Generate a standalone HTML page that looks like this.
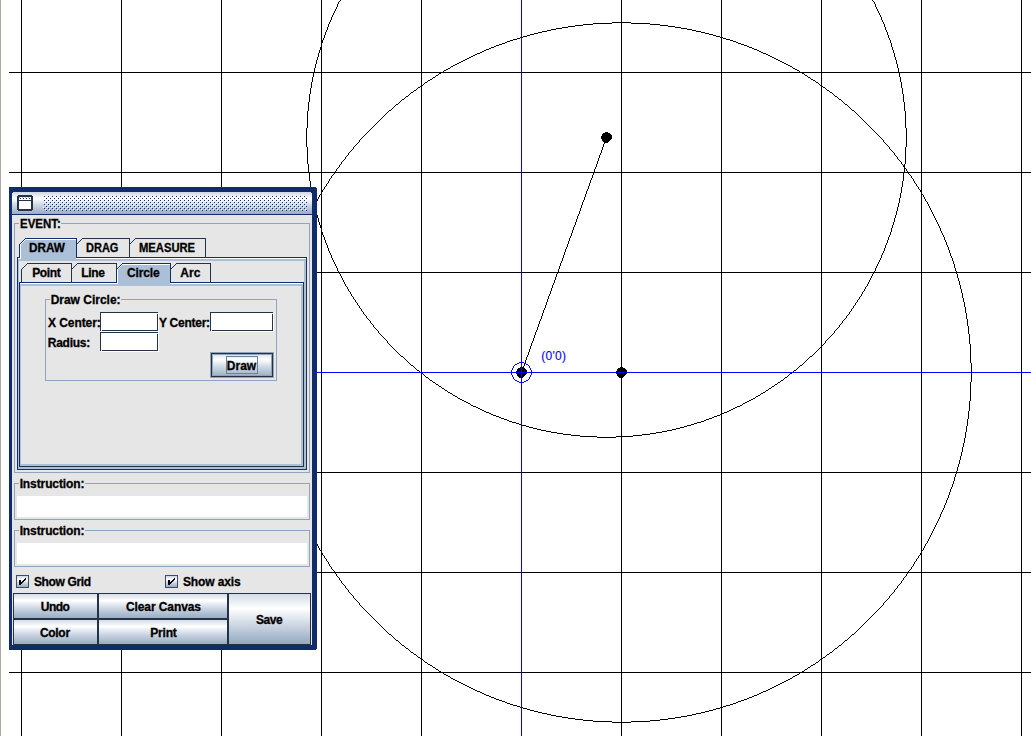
<!DOCTYPE html>
<html lang="en"><head><meta charset="utf-8"><title>Geometry Canvas</title>
<style>
html,body{margin:0;padding:0;background:#fff;}
body{width:1031px;height:736px;position:relative;overflow:hidden;font:bold 12px/14px "Liberation Sans",Arial,sans-serif;color:#000;}
div,span,svg{position:absolute;display:block;}
svg{left:0;top:0;}
.fr{background:#112c6b;}
.ct{background:#e6e6e6;}
.t{white-space:nowrap;height:14px;transform-origin:0 0;-webkit-text-stroke:0.3px #000;}
.lb{white-space:nowrap;font-weight:normal;color:#0000ff;height:14px;letter-spacing:0.3px;-webkit-text-stroke:0.1px #0000ff;}
</style></head>
<body>
<svg class="cv" width="1031" height="736" viewBox="0 0 1031 736" shape-rendering="crispEdges"><rect x="0" y="0" width="1" height="736" fill="#aca8a2"/><path d="M21 0h1v736h-1zM121 0h1v736h-1zM221 0h1v736h-1zM321 0h1v736h-1zM421 0h1v736h-1zM521 0h1v736h-1zM621 0h1v736h-1zM721 0h1v736h-1zM821 0h1v736h-1zM921 0h1v736h-1zM1021 0h1v736h-1zM9 72h1022v1h-1022zM9 172h1022v1h-1022zM9 272h1022v1h-1022zM9 372h1022v1h-1022zM9 472h1022v1h-1022zM9 572h1022v1h-1022zM9 672h1022v1h-1022z" fill="#000"/><path d="M340 0h1v1h-1zM872 0h1v1h-1zM339 1h1v1h-1zM873 1h1v1h-1zM338 2h1v2h-1zM874 2h1v2h-1zM337 4h1v3h-1zM875 4h1v3h-1zM336 7h1v2h-1zM876 7h1v2h-1zM335 9h1v2h-1zM877 9h1v2h-1zM334 11h1v2h-1zM878 11h1v2h-1zM333 13h1v2h-1zM879 13h1v2h-1zM332 15h1v2h-1zM880 15h1v2h-1zM331 17h1v3h-1zM881 17h1v3h-1zM330 20h1v2h-1zM882 20h1v2h-1zM329 22h1v2h-1zM612 22h19v1h-19zM883 22h1v2h-1zM593 23h19v1h-19zM631 23h19v1h-19zM328 24h1v3h-1zM583 24h10v1h-10zM650 24h10v1h-10zM884 24h1v3h-1zM575 25h8v1h-8zM660 25h8v1h-8zM568 26h7v1h-7zM668 26h7v1h-7zM327 27h1v3h-1zM562 27h6v1h-6zM675 27h6v1h-6zM885 27h1v3h-1zM556 28h6v1h-6zM681 28h6v1h-6zM551 29h5v1h-5zM687 29h5v1h-5zM326 30h1v2h-1zM547 30h4v1h-4zM692 30h4v1h-4zM886 30h1v2h-1zM542 31h5v1h-5zM696 31h5v1h-5zM325 32h1v3h-1zM538 32h4v1h-4zM701 32h4v1h-4zM887 32h1v3h-1zM534 33h4v1h-4zM705 33h4v1h-4zM530 34h4v1h-4zM709 34h4v1h-4zM324 35h1v3h-1zM527 35h3v1h-3zM713 35h3v1h-3zM888 35h1v3h-1zM523 36h4v1h-4zM716 36h4v1h-4zM520 37h3v1h-3zM720 37h3v1h-3zM323 38h1v2h-1zM517 38h3v1h-3zM723 38h3v1h-3zM889 38h1v2h-1zM513 39h4v1h-4zM726 39h4v1h-4zM322 40h1v3h-1zM510 40h3v1h-3zM730 40h3v1h-3zM890 40h1v3h-1zM507 41h3v1h-3zM733 41h3v1h-3zM505 42h2v1h-2zM736 42h2v1h-2zM321 43h1v4h-1zM502 43h3v1h-3zM738 43h3v1h-3zM891 43h1v4h-1zM499 44h3v1h-3zM741 44h3v1h-3zM496 45h3v1h-3zM744 45h3v1h-3zM494 46h2v1h-2zM747 46h2v1h-2zM320 47h1v3h-1zM491 47h3v1h-3zM749 47h3v1h-3zM892 47h1v3h-1zM489 48h2v1h-2zM752 48h2v1h-2zM486 49h3v1h-3zM754 49h3v1h-3zM319 50h1v3h-1zM484 50h2v1h-2zM757 50h2v1h-2zM893 50h1v3h-1zM482 51h2v1h-2zM759 51h2v1h-2zM480 52h2v1h-2zM761 52h2v1h-2zM318 53h1v4h-1zM477 53h3v1h-3zM763 53h3v1h-3zM894 53h1v4h-1zM475 54h2v1h-2zM766 54h2v1h-2zM473 55h2v1h-2zM768 55h2v1h-2zM471 56h2v1h-2zM770 56h2v1h-2zM317 57h1v3h-1zM469 57h2v1h-2zM772 57h2v1h-2zM895 57h1v3h-1zM467 58h2v1h-2zM774 58h2v1h-2zM465 59h2v1h-2zM776 59h2v1h-2zM316 60h1v4h-1zM463 60h2v1h-2zM778 60h2v1h-2zM896 60h1v4h-1zM461 61h2v1h-2zM780 61h2v1h-2zM459 62h2v1h-2zM782 62h2v1h-2zM457 63h2v1h-2zM784 63h2v1h-2zM315 64h1v4h-1zM455 64h2v1h-2zM786 64h2v1h-2zM897 64h1v4h-1zM453 65h2v1h-2zM788 65h2v1h-2zM451 66h2v1h-2zM790 66h2v1h-2zM450 67h1v1h-1zM792 67h1v1h-1zM314 68h1v4h-1zM448 68h2v1h-2zM793 68h2v1h-2zM898 68h1v4h-1zM446 69h2v1h-2zM795 69h2v1h-2zM444 70h2v1h-2zM797 70h2v1h-2zM443 71h1v1h-1zM799 71h1v1h-1zM313 72h1v5h-1zM441 72h2v1h-2zM800 72h2v1h-2zM899 72h1v5h-1zM439 73h2v1h-2zM802 73h2v1h-2zM438 74h1v1h-1zM804 74h1v1h-1zM436 75h2v1h-2zM805 75h2v1h-2zM435 76h1v1h-1zM807 76h1v1h-1zM312 77h1v5h-1zM433 77h2v1h-2zM808 77h2v1h-2zM900 77h1v5h-1zM432 78h1v1h-1zM810 78h1v1h-1zM430 79h2v1h-2zM811 79h2v1h-2zM428 80h2v1h-2zM813 80h2v1h-2zM427 81h1v1h-1zM815 81h1v1h-1zM311 82h1v6h-1zM425 82h2v1h-2zM816 82h2v1h-2zM901 82h1v6h-1zM424 83h1v1h-1zM818 83h1v1h-1zM423 84h1v1h-1zM819 84h1v1h-1zM421 85h2v1h-2zM820 85h2v1h-2zM420 86h1v1h-1zM822 86h1v1h-1zM418 87h2v1h-2zM823 87h2v1h-2zM310 88h1v6h-1zM417 88h1v1h-1zM825 88h1v1h-1zM902 88h1v6h-1zM416 89h1v1h-1zM826 89h1v1h-1zM414 90h2v1h-2zM827 90h2v1h-2zM413 91h1v1h-1zM829 91h1v1h-1zM411 92h2v1h-2zM830 92h2v1h-2zM410 93h1v1h-1zM832 93h1v1h-1zM309 94h1v8h-1zM409 94h1v1h-1zM833 94h1v1h-1zM903 94h1v8h-1zM408 95h1v1h-1zM834 95h1v1h-1zM406 96h2v1h-2zM835 96h2v1h-2zM405 97h1v1h-1zM837 97h1v1h-1zM404 98h1v1h-1zM838 98h1v1h-1zM402 99h2v1h-2zM839 99h2v1h-2zM401 100h1v1h-1zM841 100h1v1h-1zM400 101h1v1h-1zM842 101h1v1h-1zM308 102h1v9h-1zM399 102h1v1h-1zM843 102h1v1h-1zM904 102h1v9h-1zM398 103h1v1h-1zM844 103h1v1h-1zM396 104h2v1h-2zM845 104h2v1h-2zM395 105h1v1h-1zM847 105h1v1h-1zM394 106h1v1h-1zM848 106h1v1h-1zM393 107h1v1h-1zM849 107h1v1h-1zM392 108h1v1h-1zM850 108h1v1h-1zM391 109h1v1h-1zM851 109h1v1h-1zM389 110h2v1h-2zM852 110h2v1h-2zM307 111h1v17h-1zM388 111h1v1h-1zM854 111h1v1h-1zM905 111h1v17h-1zM387 112h1v1h-1zM855 112h1v1h-1zM386 113h1v1h-1zM856 113h1v1h-1zM385 114h1v1h-1zM857 114h1v1h-1zM384 115h1v1h-1zM858 115h1v1h-1zM383 116h1v1h-1zM859 116h1v1h-1zM382 117h1v1h-1zM860 117h1v1h-1zM381 118h1v1h-1zM861 118h1v1h-1zM380 119h1v1h-1zM862 119h1v1h-1zM379 120h1v1h-1zM863 120h1v1h-1zM378 121h1v1h-1zM864 121h1v1h-1zM377 122h1v1h-1zM865 122h1v1h-1zM376 123h1v1h-1zM866 123h1v1h-1zM375 124h1v1h-1zM867 124h1v1h-1zM374 125h1v1h-1zM868 125h1v1h-1zM373 126h1v1h-1zM869 126h1v1h-1zM372 127h1v1h-1zM870 127h1v1h-1zM306 128h1v19h-1zM371 128h1v1h-1zM871 128h1v1h-1zM906 128h1v19h-1zM370 129h1v1h-1zM872 129h1v1h-1zM369 130h1v1h-1zM873 130h1v1h-1zM368 131h1v1h-1zM874 131h1v1h-1zM367 132h1v1h-1zM875 132h1v1h-1zM366 133h1v1h-1zM876 133h1v1h-1zM365 134h1v1h-1zM877 134h1v1h-1zM364 135h1v1h-1zM878 135h1v1h-1zM363 136h1v1h-1zM879 136h1v1h-1zM362 137h1v1h-1zM606 137h1v2h-1zM880 137h1v1h-1zM361 138h1v1h-1zM881 138h1v1h-1zM360 139h1v1h-1zM605 139h1v3h-1zM882 139h1v1h-1zM359 140h1v2h-1zM883 140h1v2h-1zM358 142h1v1h-1zM604 142h1v2h-1zM884 142h1v1h-1zM357 143h1v1h-1zM885 143h1v1h-1zM356 144h1v1h-1zM603 144h1v3h-1zM886 144h1v1h-1zM355 145h1v1h-1zM887 145h1v1h-1zM354 146h1v1h-1zM888 146h1v1h-1zM307 147h1v17h-1zM353 147h1v2h-1zM602 147h1v3h-1zM889 147h1v2h-1zM905 147h1v17h-1zM352 149h1v1h-1zM890 149h1v1h-1zM351 150h1v1h-1zM601 150h1v3h-1zM891 150h1v1h-1zM350 151h1v1h-1zM892 151h1v1h-1zM349 152h1v1h-1zM893 152h1v1h-1zM348 153h1v2h-1zM600 153h1v2h-1zM894 153h1v2h-1zM347 155h1v1h-1zM599 155h1v3h-1zM895 155h1v1h-1zM346 156h1v1h-1zM896 156h1v1h-1zM345 157h1v2h-1zM897 157h1v2h-1zM598 158h1v3h-1zM344 159h1v1h-1zM898 159h1v1h-1zM343 160h1v1h-1zM899 160h1v1h-1zM342 161h1v1h-1zM597 161h1v3h-1zM900 161h1v1h-1zM341 162h1v2h-1zM901 162h1v2h-1zM308 164h1v9h-1zM340 164h1v1h-1zM596 164h1v3h-1zM902 164h1v1h-1zM904 164h1v1h-1zM339 165h1v2h-1zM903 165h2v2h-2zM338 167h1v1h-1zM595 167h1v2h-1zM904 167h1v1h-1zM337 168h1v1h-1zM904 168h2v1h-2zM336 169h1v2h-1zM594 169h1v3h-1zM904 169h1v4h-1zM906 169h1v2h-1zM335 171h1v1h-1zM907 171h1v1h-1zM334 172h1v2h-1zM593 172h1v3h-1zM908 172h1v2h-1zM309 173h1v8h-1zM903 173h1v8h-1zM333 174h1v1h-1zM909 174h1v1h-1zM332 175h1v1h-1zM592 175h1v3h-1zM910 175h1v1h-1zM331 176h1v2h-1zM911 176h1v2h-1zM330 178h1v1h-1zM591 178h1v2h-1zM912 178h1v1h-1zM329 179h1v2h-1zM913 179h1v2h-1zM590 180h1v3h-1zM310 181h1v6h-1zM328 181h1v2h-1zM902 181h1v6h-1zM914 181h1v2h-1zM327 183h1v1h-1zM589 183h1v3h-1zM915 183h1v1h-1zM326 184h1v2h-1zM916 184h1v2h-1zM325 186h1v1h-1zM588 186h1v3h-1zM917 186h1v1h-1zM311 187h1v6h-1zM324 187h1v2h-1zM901 187h1v6h-1zM918 187h1v2h-1zM323 189h1v1h-1zM587 189h1v2h-1zM919 189h1v1h-1zM322 190h1v2h-1zM920 190h1v2h-1zM586 191h1v3h-1zM321 192h1v2h-1zM921 192h1v2h-1zM312 193h1v5h-1zM900 193h1v5h-1zM320 194h1v1h-1zM585 194h1v3h-1zM922 194h1v1h-1zM319 195h1v2h-1zM923 195h1v2h-1zM318 197h1v2h-1zM584 197h1v3h-1zM924 197h1v2h-1zM313 198h1v5h-1zM899 198h1v5h-1zM317 199h1v2h-1zM925 199h1v2h-1zM583 200h1v2h-1zM316 201h1v1h-1zM926 201h1v1h-1zM315 202h1v1h-1zM582 202h1v3h-1zM927 202h1v2h-1zM314 203h2v1h-2zM898 203h1v4h-1zM314 204h1v2h-1zM928 204h1v2h-1zM581 205h1v3h-1zM313 206h2v1h-2zM929 206h1v2h-1zM313 207h1v1h-1zM315 207h1v4h-1zM897 207h1v4h-1zM312 208h1v2h-1zM580 208h1v3h-1zM930 208h1v2h-1zM311 210h1v2h-1zM931 210h1v2h-1zM316 211h1v4h-1zM579 211h1v3h-1zM896 211h1v4h-1zM310 212h1v2h-1zM932 212h1v2h-1zM309 214h1v2h-1zM578 214h1v2h-1zM933 214h1v2h-1zM317 215h1v3h-1zM895 215h1v3h-1zM308 216h1v2h-1zM577 216h1v3h-1zM934 216h1v2h-1zM307 218h1v2h-1zM318 218h1v4h-1zM894 218h1v4h-1zM935 218h1v2h-1zM576 219h1v3h-1zM306 220h1v2h-1zM936 220h1v2h-1zM305 222h1v2h-1zM319 222h1v3h-1zM575 222h1v3h-1zM893 222h1v3h-1zM937 222h1v2h-1zM304 224h1v2h-1zM938 224h1v2h-1zM320 225h1v3h-1zM574 225h1v2h-1zM892 225h1v3h-1zM303 226h1v2h-1zM939 226h1v2h-1zM573 227h1v3h-1zM302 228h1v3h-1zM321 228h1v4h-1zM891 228h1v4h-1zM940 228h1v3h-1zM572 230h1v3h-1zM301 231h1v2h-1zM941 231h1v2h-1zM322 232h1v3h-1zM890 232h1v3h-1zM300 233h1v2h-1zM571 233h1v3h-1zM942 233h1v2h-1zM299 235h1v2h-1zM323 235h1v2h-1zM889 235h1v2h-1zM943 235h1v2h-1zM570 236h1v2h-1zM298 237h1v3h-1zM324 237h1v3h-1zM888 237h1v3h-1zM944 237h1v3h-1zM569 238h1v3h-1zM297 240h1v2h-1zM325 240h1v3h-1zM887 240h1v3h-1zM945 240h1v2h-1zM568 241h1v3h-1zM296 242h1v3h-1zM946 242h1v3h-1zM326 243h1v2h-1zM886 243h1v2h-1zM567 244h1v3h-1zM295 245h1v2h-1zM327 245h1v3h-1zM885 245h1v3h-1zM947 245h1v2h-1zM294 247h1v3h-1zM566 247h1v2h-1zM948 247h1v3h-1zM328 248h1v3h-1zM884 248h1v3h-1zM565 249h1v3h-1zM293 250h1v3h-1zM949 250h1v3h-1zM329 251h1v2h-1zM883 251h1v2h-1zM564 252h1v3h-1zM292 253h1v3h-1zM330 253h1v2h-1zM882 253h1v2h-1zM950 253h1v3h-1zM331 255h1v3h-1zM563 255h1v3h-1zM881 255h1v3h-1zM291 256h1v2h-1zM951 256h1v2h-1zM290 258h1v3h-1zM332 258h1v2h-1zM562 258h1v3h-1zM880 258h1v2h-1zM952 258h1v3h-1zM333 260h1v2h-1zM879 260h1v2h-1zM289 261h1v3h-1zM561 261h1v2h-1zM953 261h1v3h-1zM334 262h1v2h-1zM878 262h1v2h-1zM560 263h1v3h-1zM288 264h1v4h-1zM335 264h1v2h-1zM877 264h1v2h-1zM954 264h1v4h-1zM336 266h1v2h-1zM559 266h1v3h-1zM876 266h1v2h-1zM287 268h1v3h-1zM337 268h1v3h-1zM875 268h1v3h-1zM955 268h1v3h-1zM558 269h1v3h-1zM286 271h1v3h-1zM338 271h1v2h-1zM874 271h1v2h-1zM956 271h1v3h-1zM557 272h1v2h-1zM339 273h1v1h-1zM873 273h1v1h-1zM285 274h1v4h-1zM340 274h1v2h-1zM556 274h1v3h-1zM872 274h1v2h-1zM957 274h1v4h-1zM341 276h1v2h-1zM871 276h1v2h-1zM555 277h1v3h-1zM284 278h1v3h-1zM342 278h1v2h-1zM870 278h1v2h-1zM958 278h1v3h-1zM343 280h1v2h-1zM554 280h1v3h-1zM869 280h1v2h-1zM283 281h1v4h-1zM959 281h1v4h-1zM344 282h1v2h-1zM868 282h1v2h-1zM553 283h1v2h-1zM345 284h1v2h-1zM867 284h1v2h-1zM282 285h1v4h-1zM552 285h1v3h-1zM960 285h1v4h-1zM346 286h1v1h-1zM866 286h1v1h-1zM347 287h1v2h-1zM865 287h1v2h-1zM551 288h1v3h-1zM281 289h1v4h-1zM348 289h1v2h-1zM864 289h1v2h-1zM961 289h1v4h-1zM349 291h1v1h-1zM550 291h1v3h-1zM863 291h1v1h-1zM350 292h1v2h-1zM862 292h1v2h-1zM280 293h1v5h-1zM962 293h1v5h-1zM351 294h1v2h-1zM549 294h1v2h-1zM861 294h1v2h-1zM352 296h1v1h-1zM548 296h1v3h-1zM860 296h1v1h-1zM353 297h1v2h-1zM859 297h1v2h-1zM279 298h1v4h-1zM963 298h1v4h-1zM354 299h1v1h-1zM547 299h1v3h-1zM858 299h1v1h-1zM355 300h1v2h-1zM857 300h1v2h-1zM278 302h1v5h-1zM356 302h1v1h-1zM546 302h1v3h-1zM856 302h1v1h-1zM964 302h1v5h-1zM357 303h1v2h-1zM855 303h1v2h-1zM358 305h1v1h-1zM545 305h1v3h-1zM854 305h1v1h-1zM359 306h1v2h-1zM853 306h1v2h-1zM277 307h1v6h-1zM965 307h1v6h-1zM360 308h1v1h-1zM544 308h1v2h-1zM852 308h1v1h-1zM361 309h1v2h-1zM851 309h1v2h-1zM543 310h1v3h-1zM362 311h1v1h-1zM850 311h1v1h-1zM363 312h1v2h-1zM849 312h1v2h-1zM276 313h1v6h-1zM542 313h1v3h-1zM966 313h1v6h-1zM364 314h1v1h-1zM848 314h1v1h-1zM365 315h1v1h-1zM847 315h1v1h-1zM366 316h1v2h-1zM541 316h1v3h-1zM846 316h1v2h-1zM367 318h1v1h-1zM845 318h1v1h-1zM275 319h1v7h-1zM368 319h1v1h-1zM540 319h1v2h-1zM844 319h1v1h-1zM967 319h1v7h-1zM369 320h1v1h-1zM843 320h1v1h-1zM370 321h1v2h-1zM539 321h1v3h-1zM842 321h1v2h-1zM371 323h1v1h-1zM841 323h1v1h-1zM372 324h1v1h-1zM538 324h1v3h-1zM840 324h1v1h-1zM373 325h1v2h-1zM839 325h1v2h-1zM274 326h1v8h-1zM968 326h1v8h-1zM374 327h1v1h-1zM537 327h1v3h-1zM838 327h1v1h-1zM375 328h1v1h-1zM837 328h1v1h-1zM376 329h1v1h-1zM836 329h1v1h-1zM377 330h1v1h-1zM536 330h1v2h-1zM835 330h1v1h-1zM378 331h1v2h-1zM834 331h1v2h-1zM535 332h1v3h-1zM379 333h1v1h-1zM833 333h1v1h-1zM273 334h1v10h-1zM380 334h1v1h-1zM832 334h1v1h-1zM969 334h1v10h-1zM381 335h1v1h-1zM534 335h1v3h-1zM831 335h1v1h-1zM382 336h1v1h-1zM830 336h1v1h-1zM383 337h1v1h-1zM829 337h1v1h-1zM384 338h1v1h-1zM533 338h1v3h-1zM828 338h1v1h-1zM385 339h1v1h-1zM827 339h1v1h-1zM386 340h1v1h-1zM826 340h1v1h-1zM387 341h1v2h-1zM532 341h1v2h-1zM825 341h1v2h-1zM388 343h1v1h-1zM531 343h1v3h-1zM824 343h1v1h-1zM272 344h1v19h-1zM389 344h1v1h-1zM823 344h1v1h-1zM970 344h1v19h-1zM390 345h1v1h-1zM822 345h1v1h-1zM391 346h1v1h-1zM530 346h1v3h-1zM821 346h1v1h-1zM392 347h1v1h-1zM820 347h1v1h-1zM393 348h1v1h-1zM819 348h1v1h-1zM394 349h1v1h-1zM529 349h1v3h-1zM818 349h1v1h-1zM395 350h1v1h-1zM817 350h1v1h-1zM396 351h1v1h-1zM816 351h1v1h-1zM397 352h1v1h-1zM528 352h1v3h-1zM815 352h1v1h-1zM398 353h1v1h-1zM814 353h1v1h-1zM399 354h1v1h-1zM813 354h1v1h-1zM400 355h1v1h-1zM527 355h1v2h-1zM812 355h1v1h-1zM401 356h2v1h-2zM810 356h2v1h-2zM403 357h1v1h-1zM526 357h1v3h-1zM809 357h1v1h-1zM404 358h1v1h-1zM808 358h1v1h-1zM405 359h1v1h-1zM807 359h1v1h-1zM406 360h1v1h-1zM525 360h1v3h-1zM806 360h1v1h-1zM407 361h1v1h-1zM805 361h1v1h-1zM408 362h1v1h-1zM804 362h1v1h-1zM271 363h1v19h-1zM409 363h1v1h-1zM524 363h1v3h-1zM803 363h1v1h-1zM971 363h1v19h-1zM410 364h1v1h-1zM802 364h1v1h-1zM411 365h2v1h-2zM800 365h2v1h-2zM413 366h1v1h-1zM523 366h1v2h-1zM799 366h1v1h-1zM414 367h1v1h-1zM798 367h1v1h-1zM415 368h1v1h-1zM522 368h1v3h-1zM797 368h1v1h-1zM416 369h1v1h-1zM796 369h1v1h-1zM417 370h2v1h-2zM794 370h2v1h-2zM419 371h1v1h-1zM521 371h1v2h-1zM793 371h1v1h-1zM420 372h1v1h-1zM792 372h1v1h-1zM421 373h2v1h-2zM790 373h2v1h-2zM423 374h1v1h-1zM789 374h1v1h-1zM424 375h1v1h-1zM788 375h1v1h-1zM425 376h1v1h-1zM787 376h1v1h-1zM426 377h2v1h-2zM785 377h2v1h-2zM428 378h1v1h-1zM784 378h1v1h-1zM429 379h1v1h-1zM783 379h1v1h-1zM430 380h2v1h-2zM781 380h2v1h-2zM432 381h1v1h-1zM780 381h1v1h-1zM272 382h1v19h-1zM433 382h2v1h-2zM778 382h2v1h-2zM970 382h1v19h-1zM435 383h1v1h-1zM777 383h1v1h-1zM436 384h2v1h-2zM775 384h2v1h-2zM438 385h1v1h-1zM774 385h1v1h-1zM439 386h2v1h-2zM772 386h2v1h-2zM441 387h1v1h-1zM771 387h1v1h-1zM442 388h2v1h-2zM769 388h2v1h-2zM444 389h1v1h-1zM768 389h1v1h-1zM445 390h2v1h-2zM766 390h2v1h-2zM447 391h1v1h-1zM765 391h1v1h-1zM448 392h2v1h-2zM763 392h2v1h-2zM450 393h2v1h-2zM761 393h2v1h-2zM452 394h1v1h-1zM760 394h1v1h-1zM453 395h2v1h-2zM758 395h2v1h-2zM455 396h2v1h-2zM756 396h2v1h-2zM457 397h1v1h-1zM755 397h1v1h-1zM458 398h2v1h-2zM753 398h2v1h-2zM460 399h2v1h-2zM751 399h2v1h-2zM462 400h2v1h-2zM749 400h2v1h-2zM273 401h1v10h-1zM464 401h2v1h-2zM747 401h2v1h-2zM969 401h1v10h-1zM466 402h2v1h-2zM745 402h2v1h-2zM468 403h2v1h-2zM743 403h2v1h-2zM470 404h1v1h-1zM742 404h1v1h-1zM471 405h2v1h-2zM740 405h2v1h-2zM473 406h3v1h-3zM737 406h3v1h-3zM476 407h2v1h-2zM735 407h2v1h-2zM478 408h2v1h-2zM733 408h2v1h-2zM480 409h2v1h-2zM731 409h2v1h-2zM482 410h2v1h-2zM729 410h2v1h-2zM274 411h1v8h-1zM484 411h2v1h-2zM727 411h2v1h-2zM968 411h1v8h-1zM486 412h3v1h-3zM724 412h3v1h-3zM489 413h2v1h-2zM722 413h2v1h-2zM491 414h2v1h-2zM720 414h2v1h-2zM493 415h3v1h-3zM717 415h3v1h-3zM496 416h3v1h-3zM714 416h3v1h-3zM499 417h2v1h-2zM712 417h2v1h-2zM501 418h3v1h-3zM709 418h3v1h-3zM275 419h1v7h-1zM504 419h3v1h-3zM706 419h3v1h-3zM967 419h1v7h-1zM507 420h2v1h-2zM704 420h2v1h-2zM509 421h3v1h-3zM701 421h3v1h-3zM512 422h4v1h-4zM697 422h4v1h-4zM516 423h3v1h-3zM694 423h3v1h-3zM519 424h3v1h-3zM691 424h3v1h-3zM522 425h4v1h-4zM687 425h4v1h-4zM276 426h1v6h-1zM526 426h3v1h-3zM684 426h3v1h-3zM966 426h1v6h-1zM529 427h4v1h-4zM680 427h4v1h-4zM533 428h4v1h-4zM676 428h4v1h-4zM537 429h4v1h-4zM672 429h4v1h-4zM541 430h5v1h-5zM667 430h5v1h-5zM546 431h5v1h-5zM662 431h5v1h-5zM277 432h1v6h-1zM551 432h6v1h-6zM656 432h6v1h-6zM965 432h1v6h-1zM557 433h6v1h-6zM650 433h6v1h-6zM563 434h8v1h-8zM642 434h8v1h-8zM571 435h9v1h-9zM633 435h9v1h-9zM580 436h17v1h-17zM616 436h17v1h-17zM597 437h19v1h-19zM278 438h1v5h-1zM964 438h1v5h-1zM279 443h1v4h-1zM963 443h1v4h-1zM280 447h1v5h-1zM962 447h1v5h-1zM281 452h1v4h-1zM961 452h1v4h-1zM282 456h1v4h-1zM960 456h1v4h-1zM283 460h1v4h-1zM959 460h1v4h-1zM284 464h1v3h-1zM958 464h1v3h-1zM285 467h1v4h-1zM957 467h1v4h-1zM286 471h1v3h-1zM956 471h1v3h-1zM287 474h1v3h-1zM955 474h1v3h-1zM288 477h1v4h-1zM954 477h1v4h-1zM289 481h1v3h-1zM953 481h1v3h-1zM290 484h1v3h-1zM952 484h1v3h-1zM291 487h1v2h-1zM951 487h1v2h-1zM292 489h1v3h-1zM950 489h1v3h-1zM293 492h1v3h-1zM949 492h1v3h-1zM294 495h1v3h-1zM948 495h1v3h-1zM295 498h1v2h-1zM947 498h1v2h-1zM296 500h1v3h-1zM946 500h1v3h-1zM297 503h1v2h-1zM945 503h1v2h-1zM298 505h1v3h-1zM944 505h1v3h-1zM299 508h1v2h-1zM943 508h1v2h-1zM300 510h1v2h-1zM942 510h1v2h-1zM301 512h1v2h-1zM941 512h1v2h-1zM302 514h1v3h-1zM940 514h1v3h-1zM303 517h1v2h-1zM939 517h1v2h-1zM304 519h1v2h-1zM938 519h1v2h-1zM305 521h1v2h-1zM937 521h1v2h-1zM306 523h1v2h-1zM936 523h1v2h-1zM307 525h1v2h-1zM935 525h1v2h-1zM308 527h1v2h-1zM934 527h1v2h-1zM309 529h1v2h-1zM933 529h1v2h-1zM310 531h1v2h-1zM932 531h1v2h-1zM311 533h1v2h-1zM931 533h1v2h-1zM312 535h1v2h-1zM930 535h1v2h-1zM313 537h1v2h-1zM929 537h1v2h-1zM314 539h1v2h-1zM928 539h1v2h-1zM315 541h1v2h-1zM927 541h1v2h-1zM316 543h1v1h-1zM926 543h1v1h-1zM317 544h1v2h-1zM925 544h1v2h-1zM318 546h1v2h-1zM924 546h1v2h-1zM319 548h1v2h-1zM923 548h1v2h-1zM320 550h1v1h-1zM922 550h1v1h-1zM321 551h1v2h-1zM921 551h1v2h-1zM322 553h1v2h-1zM920 553h1v2h-1zM323 555h1v1h-1zM919 555h1v1h-1zM324 556h1v2h-1zM918 556h1v2h-1zM325 558h1v1h-1zM917 558h1v1h-1zM326 559h1v2h-1zM916 559h1v2h-1zM327 561h1v1h-1zM915 561h1v1h-1zM328 562h1v2h-1zM914 562h1v2h-1zM329 564h1v2h-1zM913 564h1v2h-1zM330 566h1v1h-1zM912 566h1v1h-1zM331 567h1v2h-1zM911 567h1v2h-1zM332 569h1v1h-1zM910 569h1v1h-1zM333 570h1v1h-1zM909 570h1v1h-1zM334 571h1v2h-1zM908 571h1v2h-1zM335 573h1v1h-1zM907 573h1v1h-1zM336 574h1v2h-1zM906 574h1v2h-1zM337 576h1v1h-1zM905 576h1v1h-1zM338 577h1v1h-1zM904 577h1v1h-1zM339 578h1v2h-1zM903 578h1v2h-1zM340 580h1v1h-1zM902 580h1v1h-1zM341 581h1v2h-1zM901 581h1v2h-1zM342 583h1v1h-1zM900 583h1v1h-1zM343 584h1v1h-1zM899 584h1v1h-1zM344 585h1v1h-1zM898 585h1v1h-1zM345 586h1v2h-1zM897 586h1v2h-1zM346 588h1v1h-1zM896 588h1v1h-1zM347 589h1v1h-1zM895 589h1v1h-1zM348 590h1v2h-1zM894 590h1v2h-1zM349 592h1v1h-1zM893 592h1v1h-1zM350 593h1v1h-1zM892 593h1v1h-1zM351 594h1v1h-1zM891 594h1v1h-1zM352 595h1v1h-1zM890 595h1v1h-1zM353 596h1v2h-1zM889 596h1v2h-1zM354 598h1v1h-1zM888 598h1v1h-1zM355 599h1v1h-1zM887 599h1v1h-1zM356 600h1v1h-1zM886 600h1v1h-1zM357 601h1v1h-1zM885 601h1v1h-1zM358 602h1v1h-1zM884 602h1v1h-1zM359 603h1v2h-1zM883 603h1v2h-1zM360 605h1v1h-1zM882 605h1v1h-1zM361 606h1v1h-1zM881 606h1v1h-1zM362 607h1v1h-1zM880 607h1v1h-1zM363 608h1v1h-1zM879 608h1v1h-1zM364 609h1v1h-1zM878 609h1v1h-1zM365 610h1v1h-1zM877 610h1v1h-1zM366 611h1v1h-1zM876 611h1v1h-1zM367 612h1v1h-1zM875 612h1v1h-1zM368 613h1v1h-1zM874 613h1v1h-1zM369 614h1v1h-1zM873 614h1v1h-1zM370 615h1v1h-1zM872 615h1v1h-1zM371 616h1v1h-1zM871 616h1v1h-1zM372 617h1v1h-1zM870 617h1v1h-1zM373 618h1v1h-1zM869 618h1v1h-1zM374 619h1v1h-1zM868 619h1v1h-1zM375 620h1v1h-1zM867 620h1v1h-1zM376 621h1v1h-1zM866 621h1v1h-1zM377 622h1v1h-1zM865 622h1v1h-1zM378 623h1v1h-1zM864 623h1v1h-1zM379 624h1v1h-1zM863 624h1v1h-1zM380 625h1v1h-1zM862 625h1v1h-1zM381 626h1v1h-1zM861 626h1v1h-1zM382 627h1v1h-1zM860 627h1v1h-1zM383 628h1v1h-1zM859 628h1v1h-1zM384 629h1v1h-1zM858 629h1v1h-1zM385 630h1v1h-1zM857 630h1v1h-1zM386 631h1v1h-1zM856 631h1v1h-1zM387 632h1v1h-1zM855 632h1v1h-1zM388 633h1v1h-1zM854 633h1v1h-1zM389 634h2v1h-2zM852 634h2v1h-2zM391 635h1v1h-1zM851 635h1v1h-1zM392 636h1v1h-1zM850 636h1v1h-1zM393 637h1v1h-1zM849 637h1v1h-1zM394 638h1v1h-1zM848 638h1v1h-1zM395 639h1v1h-1zM847 639h1v1h-1zM396 640h2v1h-2zM845 640h2v1h-2zM398 641h1v1h-1zM844 641h1v1h-1zM399 642h1v1h-1zM843 642h1v1h-1zM400 643h1v1h-1zM842 643h1v1h-1zM401 644h1v1h-1zM841 644h1v1h-1zM402 645h2v1h-2zM839 645h2v1h-2zM404 646h1v1h-1zM838 646h1v1h-1zM405 647h1v1h-1zM837 647h1v1h-1zM406 648h2v1h-2zM835 648h2v1h-2zM408 649h1v1h-1zM834 649h1v1h-1zM409 650h1v1h-1zM833 650h1v1h-1zM410 651h1v1h-1zM832 651h1v1h-1zM411 652h2v1h-2zM830 652h2v1h-2zM413 653h1v1h-1zM829 653h1v1h-1zM414 654h2v1h-2zM827 654h2v1h-2zM416 655h1v1h-1zM826 655h1v1h-1zM417 656h1v1h-1zM825 656h1v1h-1zM418 657h2v1h-2zM823 657h2v1h-2zM420 658h1v1h-1zM822 658h1v1h-1zM421 659h2v1h-2zM820 659h2v1h-2zM423 660h1v1h-1zM819 660h1v1h-1zM424 661h1v1h-1zM818 661h1v1h-1zM425 662h2v1h-2zM816 662h2v1h-2zM427 663h1v1h-1zM815 663h1v1h-1zM428 664h2v1h-2zM813 664h2v1h-2zM430 665h2v1h-2zM811 665h2v1h-2zM432 666h1v1h-1zM810 666h1v1h-1zM433 667h2v1h-2zM808 667h2v1h-2zM435 668h1v1h-1zM807 668h1v1h-1zM436 669h2v1h-2zM805 669h2v1h-2zM438 670h1v1h-1zM804 670h1v1h-1zM439 671h2v1h-2zM802 671h2v1h-2zM441 672h2v1h-2zM800 672h2v1h-2zM443 673h1v1h-1zM799 673h1v1h-1zM444 674h2v1h-2zM797 674h2v1h-2zM446 675h2v1h-2zM795 675h2v1h-2zM448 676h2v1h-2zM793 676h2v1h-2zM450 677h1v1h-1zM792 677h1v1h-1zM451 678h2v1h-2zM790 678h2v1h-2zM453 679h2v1h-2zM788 679h2v1h-2zM455 680h2v1h-2zM786 680h2v1h-2zM457 681h2v1h-2zM784 681h2v1h-2zM459 682h2v1h-2zM782 682h2v1h-2zM461 683h2v1h-2zM780 683h2v1h-2zM463 684h2v1h-2zM778 684h2v1h-2zM465 685h2v1h-2zM776 685h2v1h-2zM467 686h2v1h-2zM774 686h2v1h-2zM469 687h2v1h-2zM772 687h2v1h-2zM471 688h2v1h-2zM770 688h2v1h-2zM473 689h2v1h-2zM768 689h2v1h-2zM475 690h2v1h-2zM766 690h2v1h-2zM477 691h3v1h-3zM763 691h3v1h-3zM480 692h2v1h-2zM761 692h2v1h-2zM482 693h2v1h-2zM759 693h2v1h-2zM484 694h2v1h-2zM757 694h2v1h-2zM486 695h3v1h-3zM754 695h3v1h-3zM489 696h2v1h-2zM752 696h2v1h-2zM491 697h3v1h-3zM749 697h3v1h-3zM494 698h2v1h-2zM747 698h2v1h-2zM496 699h3v1h-3zM744 699h3v1h-3zM499 700h3v1h-3zM741 700h3v1h-3zM502 701h3v1h-3zM738 701h3v1h-3zM505 702h2v1h-2zM736 702h2v1h-2zM507 703h3v1h-3zM733 703h3v1h-3zM510 704h3v1h-3zM730 704h3v1h-3zM513 705h4v1h-4zM726 705h4v1h-4zM517 706h3v1h-3zM723 706h3v1h-3zM520 707h3v1h-3zM720 707h3v1h-3zM523 708h4v1h-4zM716 708h4v1h-4zM527 709h3v1h-3zM713 709h3v1h-3zM530 710h4v1h-4zM709 710h4v1h-4zM534 711h4v1h-4zM705 711h4v1h-4zM538 712h4v1h-4zM701 712h4v1h-4zM542 713h5v1h-5zM696 713h5v1h-5zM547 714h4v1h-4zM692 714h4v1h-4zM551 715h5v1h-5zM687 715h5v1h-5zM556 716h6v1h-6zM681 716h6v1h-6zM562 717h6v1h-6zM675 717h6v1h-6zM568 718h7v1h-7zM668 718h7v1h-7zM575 719h8v1h-8zM660 719h8v1h-8zM583 720h10v1h-10zM650 720h10v1h-10zM593 721h19v1h-19zM631 721h19v1h-19zM612 722h19v1h-19z" fill="#000"/><path d="M521 0h1v736h-1zM9 372h1022v1h-1022z" fill="#0000ff"/><path d="M519 362h5v1h-5zM517 363h2v1h-2zM524 363h2v1h-2zM515 364h2v1h-2zM526 364h2v1h-2zM514 365h1v1h-1zM528 365h1v1h-1zM513 366h1v2h-1zM529 366h1v2h-1zM512 368h1v2h-1zM530 368h1v2h-1zM511 370h1v5h-1zM531 370h1v5h-1zM512 375h1v2h-1zM530 375h1v2h-1zM513 377h1v2h-1zM529 377h1v2h-1zM514 379h1v1h-1zM528 379h1v1h-1zM515 380h2v1h-2zM526 380h2v1h-2zM517 381h2v1h-2zM524 381h2v1h-2zM519 382h5v1h-5z" fill="#0000ff"/><path d="M605 132h3v1h-3zM603 133h7v1h-7zM602 134h9v1h-9zM602 135h10v1h-10zM601 136h11v3h-11zM602 139h9v1h-9zM602 140h8v1h-8zM603 141h6v1h-6zM604 142h4v1h-4zM520 367h3v1h-3zM620 367h3v1h-3zM518 368h7v1h-7zM618 368h7v1h-7zM517 369h9v1h-9zM617 369h9v1h-9zM517 370h10v1h-10zM617 370h10v1h-10zM516 371h11v3h-11zM616 371h11v3h-11zM517 374h9v1h-9zM617 374h9v1h-9zM517 375h8v1h-8zM617 375h8v1h-8zM518 376h6v1h-6zM618 376h6v1h-6zM519 377h4v1h-4zM619 377h4v1h-4z" fill="#000"/><path d="M516 372h11v1h-11zM617 372h9v1h-9zM521 367h1v11h-1z" fill="#0000ff"/></svg>
<div class="fr" style="left:9px;top:187px;width:308px;height:463px;"></div>
<div class="g" style="left:12px;top:192px;width:300px;height:23px;background:linear-gradient(to bottom,#d1dae5 0.5px,#fff 6.5px,#d1dae5 12.5px,#8fa5be 23.5px);"></div>
<div class="ct" style="left:12px;top:215px;width:300px;height:430px;"></div>
<div class="g" style="left:210px;top:352px;width:64px;height:26px;background:linear-gradient(to bottom,#d1dae5 0.5px,#fff 7.5px,#d1dae5 14.5px,#8fa5be 26.5px);"></div>
<div class="g" style="left:17px;top:576px;width:11px;height:11px;background:linear-gradient(to bottom,#d1dae5 0.5px,#fff 3.5px,#d1dae5 6.5px,#8fa5be 11.5px);"></div>
<div class="g" style="left:166px;top:576px;width:11px;height:11px;background:linear-gradient(to bottom,#d1dae5 0.5px,#fff 3.5px,#d1dae5 6.5px,#8fa5be 11.5px);"></div>
<div class="g" style="left:13px;top:593px;width:85px;height:26px;background:linear-gradient(to bottom,#d1dae5 0.5px,#fff 7.5px,#d1dae5 14.5px,#8fa5be 26.5px);"></div>
<div class="g" style="left:13px;top:619px;width:85px;height:26px;background:linear-gradient(to bottom,#d1dae5 0.5px,#fff 7.5px,#d1dae5 14.5px,#8fa5be 26.5px);"></div>
<div class="g" style="left:98px;top:593px;width:130px;height:26px;background:linear-gradient(to bottom,#d1dae5 0.5px,#fff 7.5px,#d1dae5 14.5px,#8fa5be 26.5px);"></div>
<div class="g" style="left:98px;top:619px;width:130px;height:26px;background:linear-gradient(to bottom,#d1dae5 0.5px,#fff 7.5px,#d1dae5 14.5px,#8fa5be 26.5px);"></div>
<div class="g" style="left:228px;top:593px;width:83px;height:52px;background:linear-gradient(to bottom,#d1dae5 0.5px,#fff 15.5px,#d1dae5 30.5px,#8fa5be 52.5px);"></div>
<svg class="la" width="1031" height="736" viewBox="0 0 1031 736" shape-rendering="crispEdges"><defs><pattern id="bm" x="43" y="195" width="4" height="4" patternUnits="userSpaceOnUse"><path d="M1 1h1v1h-1zM3 3h1v1h-1z" fill="#112c6b"/><path d="M0 0h1v1h-1zM2 2h1v1h-1z" fill="#fff"/></pattern></defs><rect x="43" y="195" width="264" height="16" fill="url(#bm)"/><path d="M12 214h300v1h-300zM12 192h1v1h-1zM311 192h1v1h-1z" fill="#112c6b"/><path d="M316 187h1v1h-1zM316 649h1v1h-1z" fill="#ffffff"/><path d="M18 196h14v14h-14z" fill="#fdfdfa"/><path d="M19 201h12v9h-12z" fill="#ffffff"/><path d="M19 197h1v1h-1zM22 197h1v1h-1zM25 197h1v1h-1zM28 197h1v1h-1z" fill="#93aed2"/><path d="M18 196h14v1h-14zM18 209h14v1h-14zM18 197h1v12h-1zM31 197h1v12h-1zM18 195h14v1h-14zM32 196h1v14h-1zM18 210h14v1h-14zM17 196h1v14h-1zM19 200h12v1h-12z" fill="#233244"/><path d="M20 198h1v1h-1zM23 198h1v1h-1zM26 198h1v1h-1zM29 198h1v1h-1z" fill="#112c6b"/><path d="M14 223h5v1h-5zM61 223h249v1h-249zM14 472h296v1h-296zM14 223h1v250h-1zM309 223h1v250h-1z" fill="#8ea4bf"/><path d="M17 257h290v4h-290zM304 257h3v213h-3zM17 467h290v3h-290zM18 257h1v213h-1z" fill="#abbfd7"/><path d="M17 469h290v1h-290zM306 257h1v213h-1z" fill="#233244"/><path d="M17 257h1v213h-1zM17 257h290v1h-290z" fill="#112c6b"/><path d="M18 258h288v1h-288z" fill="#ffffff"/><path d="M20 257h56v2h-56zM25 238h51v1h-51zM24 239h52v1h-52zM23 240h53v1h-53zM22 241h54v1h-54zM21 242h55v1h-55zM20 243h56v1h-56zM19 244h57v1h-57zM19 245h57v13h-57z" fill="#abbfd7"/><path d="M25 239h51v1h-51zM20 244h1v1h-1zM21 243h1v1h-1zM22 242h1v1h-1zM23 241h1v1h-1zM24 240h1v1h-1zM25 239h1v1h-1zM20 245h1v14h-1z" fill="#ffffff"/><path d="M82 238h48v1h-48zM76 244h1v1h-1zM77 243h1v1h-1zM78 242h1v1h-1zM79 241h1v1h-1zM80 240h1v1h-1zM81 239h1v1h-1zM82 238h1v1h-1zM129 238h1v20h-1zM135 238h71v1h-71zM129 244h1v1h-1zM130 243h1v1h-1zM131 242h1v1h-1zM132 241h1v1h-1zM133 240h1v1h-1zM134 239h1v1h-1zM135 238h1v1h-1zM205 238h1v20h-1z" fill="#233244"/><path d="M25 238h52v1h-52zM19 244h1v1h-1zM20 243h1v1h-1zM21 242h1v1h-1zM22 241h1v1h-1zM23 240h1v1h-1zM24 239h1v1h-1zM25 238h1v1h-1zM19 244h1v14h-1zM76 238h1v20h-1z" fill="#112c6b"/><path d="M19 282h285v4h-285zM301 282h3v185h-3zM19 464h285v3h-285zM20 282h1v185h-1z" fill="#abbfd7"/><path d="M19 466h285v1h-285zM303 282h1v185h-1z" fill="#233244"/><path d="M19 282h1v185h-1zM19 282h285v1h-285z" fill="#112c6b"/><path d="M20 283h283v1h-283z" fill="#ffffff"/><path d="M118 282h52v2h-52zM122 263h48v1h-48zM121 264h49v1h-49zM120 265h50v1h-50zM119 266h51v1h-51zM118 267h52v1h-52zM117 268h53v1h-53zM116 269h54v1h-54zM116 270h54v13h-54z" fill="#abbfd7"/><path d="M122 264h48v1h-48zM117 269h1v1h-1zM118 268h1v1h-1zM119 267h1v1h-1zM120 266h1v1h-1zM121 265h1v1h-1zM122 264h1v1h-1zM117 270h1v14h-1z" fill="#ffffff"/><path d="M27 263h45v1h-45zM21 269h1v1h-1zM22 268h1v1h-1zM23 267h1v1h-1zM24 266h1v1h-1zM25 265h1v1h-1zM26 264h1v1h-1zM27 263h1v1h-1zM21 269h1v14h-1zM71 263h1v20h-1zM77 263h40v1h-40zM71 269h1v1h-1zM72 268h1v1h-1zM73 267h1v1h-1zM74 266h1v1h-1zM75 265h1v1h-1zM76 264h1v1h-1zM77 263h1v1h-1zM116 263h1v20h-1zM176 263h35v1h-35zM170 269h1v1h-1zM171 268h1v1h-1zM172 267h1v1h-1zM173 266h1v1h-1zM174 265h1v1h-1zM175 264h1v1h-1zM176 263h1v1h-1zM210 263h1v20h-1z" fill="#233244"/><path d="M122 263h49v1h-49zM116 269h1v1h-1zM117 268h1v1h-1zM118 267h1v1h-1zM119 266h1v1h-1zM120 265h1v1h-1zM121 264h1v1h-1zM122 263h1v1h-1zM116 269h1v14h-1zM170 263h1v20h-1z" fill="#112c6b"/><path d="M45 299h5v1h-5zM121 299h156v1h-156zM45 380h232v1h-232zM45 299h1v82h-1zM276 299h1v82h-1z" fill="#8ea4bf"/><path d="M100 312h59v20h-59z" fill="#ffffff"/><path d="M100 312h58v1h-58zM100 330h58v1h-58zM100 313h1v17h-1zM157 313h1v17h-1z" fill="#233244"/><path d="M100 331h1v1h-1zM101 330h1v1h-1zM158 312h1v1h-1zM157 313h1v1h-1z" fill="#e6e6e6"/><path d="M210 312h64v20h-64z" fill="#ffffff"/><path d="M210 312h63v1h-63zM210 330h63v1h-63zM210 313h1v17h-1zM272 313h1v17h-1z" fill="#233244"/><path d="M210 331h1v1h-1zM211 330h1v1h-1zM273 312h1v1h-1zM272 313h1v1h-1z" fill="#e6e6e6"/><path d="M100 332h59v20h-59z" fill="#ffffff"/><path d="M100 332h58v1h-58zM100 350h58v1h-58zM100 333h1v17h-1zM157 333h1v17h-1z" fill="#233244"/><path d="M100 351h1v1h-1zM101 350h1v1h-1zM158 332h1v1h-1zM157 333h1v1h-1z" fill="#e6e6e6"/><path d="M210 352h64v1h-64zM210 377h64v1h-64zM210 353h1v24h-1zM273 353h1v24h-1zM212 354h60v1h-60zM212 375h60v1h-60zM212 355h1v20h-1zM271 355h1v20h-1z" fill="#8fa3ba"/><path d="M211 353h62v1h-62zM211 376h62v1h-62zM211 354h1v22h-1zM272 354h1v22h-1z" fill="#233244"/><path d="M226 356h32v1h-32zM226 373h32v1h-32zM226 357h1v16h-1zM257 357h1v16h-1z" fill="#6d8098"/><path d="M14 483h5v1h-5zM85 483h225v1h-225zM14 519h296v1h-296zM14 483h1v37h-1zM309 483h1v37h-1z" fill="#8ea4bf"/><path d="M17 496h290v21h-290z" fill="#ffffff"/><path d="M14 530h5v1h-5zM85 530h225v1h-225zM14 566h296v1h-296zM14 530h1v37h-1zM309 530h1v37h-1z" fill="#8ea4bf"/><path d="M17 543h290v21h-290z" fill="#ffffff"/><path d="M16 575h13v1h-13zM16 587h13v1h-13zM16 576h1v11h-1zM28 576h1v11h-1z" fill="#3d4e63"/><path d="M19 580h2v5h-2zM25 578h1v1h-1zM24 579h1v1h-1zM23 580h1v1h-1zM22 581h1v1h-1zM21 582h1v1h-1zM25 579h1v1h-1zM24 580h1v1h-1zM23 581h1v1h-1zM22 582h1v1h-1zM21 583h1v1h-1z" fill="#000"/><path d="M165 575h13v1h-13zM165 587h13v1h-13zM165 576h1v11h-1zM177 576h1v11h-1z" fill="#3d4e63"/><path d="M168 580h2v5h-2zM174 578h1v1h-1zM173 579h1v1h-1zM172 580h1v1h-1zM171 581h1v1h-1zM170 582h1v1h-1zM174 579h1v1h-1zM173 580h1v1h-1zM172 581h1v1h-1zM171 582h1v1h-1zM170 583h1v1h-1z" fill="#000"/><path d="M13 593h85v1h-85zM13 618h85v1h-85zM13 594h1v24h-1zM97 594h1v24h-1zM13 619h85v1h-85zM13 644h85v1h-85zM13 620h1v24h-1zM97 620h1v24h-1zM98 593h130v1h-130zM98 618h130v1h-130zM98 594h1v24h-1zM227 594h1v24h-1zM98 619h130v1h-130zM98 644h130v1h-130zM98 620h1v24h-1zM227 620h1v24h-1zM228 593h83v1h-83zM228 644h83v1h-83zM228 594h1v50h-1zM310 594h1v50h-1z" fill="#233244"/></svg>
<span class="t" style="left:20px;top:217px;transform:scaleX(0.954);">EVENT:</span>
<span class="t" style="left:29px;top:241px;transform:scaleX(0.980);">DRAW</span>
<span class="t" style="left:86px;top:241px;transform:scaleX(0.916);">DRAG</span>
<span class="t" style="left:139px;top:241px;transform:scaleX(0.935);">MEASURE</span>
<span class="t" style="left:32.23px;top:266px;letter-spacing:-0.373px;">Point</span>
<span class="t" style="left:81.13px;top:266px;letter-spacing:-0.283px;">Line</span>
<span class="t" style="left:127.05px;top:266px;letter-spacing:-0.130px;">Circle</span>
<span class="t" style="left:180.14px;top:266px;letter-spacing:0.085px;">Arc</span>
<span class="t" style="left:50.63px;top:293px;letter-spacing:-0.006px;">Draw Circle:</span>
<span class="t" style="left:48.09px;top:316px;letter-spacing:-0.080px;">X Center:</span>
<span class="t" style="left:159.03px;top:316px;letter-spacing:-0.260px;">Y Center:</span>
<span class="t" style="left:47.73px;top:336px;letter-spacing:-0.253px;">Radius:</span>
<span class="t" style="left:226.83px;top:359px;letter-spacing:-0.007px;">Draw</span>
<span class="t" style="left:19.63px;top:477px;letter-spacing:-0.100px;">Instruction:</span>
<span class="t" style="left:19.63px;top:524px;letter-spacing:-0.100px;">Instruction:</span>
<span class="t" style="left:33.95px;top:575px;letter-spacing:-0.350px;">Show Grid</span>
<span class="t" style="left:182.95px;top:575px;letter-spacing:-0.109px;">Show axis</span>
<span class="t" style="left:40.80px;top:600px;letter-spacing:-0.503px;">Undo</span>
<span class="t" style="left:39.95px;top:626px;letter-spacing:-0.303px;">Color</span>
<span class="t" style="left:125.95px;top:600px;letter-spacing:-0.090px;">Clear Canvas</span>
<span class="t" style="left:150.13px;top:626px;letter-spacing:-0.163px;">Print</span>
<span class="t" style="left:255.95px;top:613px;letter-spacing:-0.390px;">Save</span>
<span class="lb" style="left:541.2px;top:349px;">(0&#39;0)</span>
</body></html>
